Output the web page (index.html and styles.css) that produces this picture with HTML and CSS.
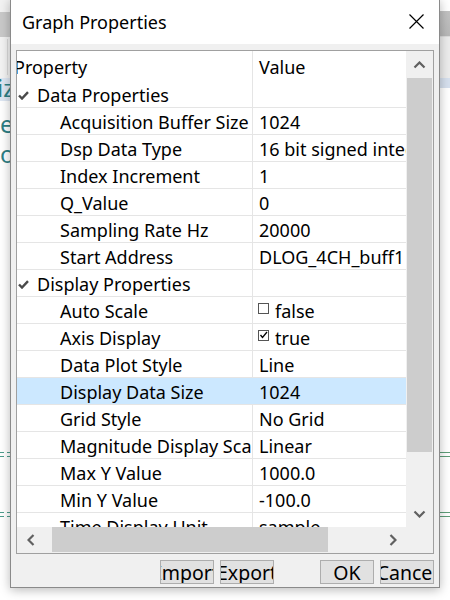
FILE: index.html
```html
<!DOCTYPE html>
<html lang="en">
<head>
  <meta charset="UTF-8" />
  <title>Graph Properties</title>
  <link rel="stylesheet" href="styles.css">
</head>
<body>
  <!-- windows behind the dialog -->
  <div class="back back-left">
    <div class="bl-top"></div>
    <div class="bl-band"></div>
    <div class="bl-tool"><span class="bl-sep"></span></div>
    <div class="bl-sel"><span class="teal">iz</span></div>
    <div class="bl-text first teal">e</div>
    <div class="bl-text teal">o</div>
    <div class="wire-l wire-a"></div>
    <div class="wire-l wire-b"></div>
  </div>
  <div class="back back-right">
    <div class="br-band"></div>
    <div class="br-tool"></div>
    <div class="br-sel"></div>
    <div class="wire-r wire-a"></div>
    <div class="wire-r wire-b"></div>
  </div>

  <div class="dialog">
    <div class="titlebar">
      <span class="title">Graph Properties</span>
      <svg class="close" width="15" height="15" viewBox="0 0 15 15">
        <path d="M0.5 0.5 L14.5 14.5 M14.5 0.5 L0.5 14.5" stroke="#000" stroke-width="1.2" fill="none"/>
      </svg>
    </div>

    <div class="body">
      <div class="grid-panel">
        <div class="grid-main">
          <div class="grid-view">
            <div class="row head">
              <div class="prop"><span class="shift">Property</span></div>
              <div class="val">Value</div>
            </div>

            <div class="row cat">
              <div class="prop">
                <svg class="tick" width="11" height="9" viewBox="0 0 11 9"><path d="M1 4.5 L4 7.5 L10 1.2" stroke="#4a4a4a" stroke-width="2.4" fill="none"/></svg>
                Data Properties
              </div>
              <div class="val"></div>
            </div>
            <div class="row"><div class="prop">Acquisition Buffer Size</div><div class="val">1024</div></div>
            <div class="row"><div class="prop">Dsp Data Type</div><div class="val">16 bit signed integer</div></div>
            <div class="row"><div class="prop">Index Increment</div><div class="val">1</div></div>
            <div class="row"><div class="prop">Q_Value</div><div class="val">0</div></div>
            <div class="row"><div class="prop">Sampling Rate Hz</div><div class="val">20000</div></div>
            <div class="row"><div class="prop">Start Address</div><div class="val">DLOG_4CH_buff1</div></div>

            <div class="row cat">
              <div class="prop">
                <svg class="tick" width="11" height="9" viewBox="0 0 11 9"><path d="M1 4.5 L4 7.5 L10 1.2" stroke="#4a4a4a" stroke-width="2.4" fill="none"/></svg>
                Display Properties
              </div>
              <div class="val"></div>
            </div>
            <div class="row"><div class="prop">Auto Scale</div><div class="val"><span class="check"></span>false</div></div>
            <div class="row">
              <div class="prop">Axis Display</div>
              <div class="val">
                <span class="check">
                  <svg width="9" height="9" viewBox="0 0 9 9"><path d="M1.5 4 L3.5 6.5 L8 1" stroke="#000" stroke-width="1.3" fill="none"/></svg>
                </span>true
              </div>
            </div>
            <div class="row"><div class="prop">Data Plot Style</div><div class="val">Line</div></div>
            <div class="row selected"><div class="prop">Display Data Size</div><div class="val">1024</div></div>
            <div class="row"><div class="prop">Grid Style</div><div class="val">No Grid</div></div>
            <div class="row"><div class="prop">Magnitude Display Scale</div><div class="val">Linear</div></div>
            <div class="row"><div class="prop">Max Y Value</div><div class="val">1000.0</div></div>
            <div class="row"><div class="prop">Min Y Value</div><div class="val">-100.0</div></div>
            <div class="row"><div class="prop">Time Display Unit</div><div class="val">sample</div></div>
          </div>

          <div class="vscroll">
            <div class="sb-btn">
              <svg width="13" height="8" viewBox="0 0 13 8"><path d="M1.5 6.5 L6.5 1.5 L11.5 6.5" stroke="#606060" stroke-width="2.2" fill="none"/></svg>
            </div>
            <div class="vthumb"></div>
            <div class="sb-fill"></div>
            <div class="sb-btn">
              <svg width="13" height="8" viewBox="0 0 13 8"><path d="M1.5 1.5 L6.5 6.5 L11.5 1.5" stroke="#606060" stroke-width="2.2" fill="none"/></svg>
            </div>
          </div>
        </div>

        <div class="hbar">
          <div class="hscroll">
            <div class="sb-btn h">
              <svg width="8" height="12" viewBox="0 0 8 12"><path d="M6.5 1 L1.5 6 L6.5 11" stroke="#606060" stroke-width="2.2" fill="none"/></svg>
            </div>
            <div class="htrack"><div class="hthumb"></div></div>
            <div class="sb-btn h">
              <svg width="8" height="12" viewBox="0 0 8 12"><path d="M1.5 1 L6.5 6 L1.5 11" stroke="#606060" stroke-width="2.2" fill="none"/></svg>
            </div>
          </div>
          <div class="corner"></div>
        </div>
      </div>

      <div class="buttons">
        <button class="btn">Import</button>
        <button class="btn">Export</button>
        <button class="btn ok">OK</button>
        <button class="btn">Cancel</button>
      </div>
    </div>
  </div>
</body>
</html>
```

FILE: styles.css
```css
body {
  margin: 0;
  width: 450px;
  height: 600px;
  overflow: hidden;
  position: relative;
  background: #fff;
  font-family: "Noto Sans", "Open Sans", sans-serif;
}

/* ---- windows behind ---- */
.back {
  position: absolute;
  top: 0;
  height: 600px;
  overflow: hidden;
}

.back-left {
  left: 0;
  width: 12px;
}

.back-right {
  left: 438px;
  width: 12px;
}

.bl-top {
  height: 12px;
  background: #f2f2f2;
}

.bl-band {
  height: 25px;
  background: #c9c9c9;
}

.bl-tool {
  height: 41px;
  background: #f3f3f3;
  position: relative;
}

.bl-sep {
  position: absolute;
  left: 7px;
  top: 2px;
  width: 1px;
  height: 36px;
  background: #dadada;
}

.bl-sel {
  height: 23px;
  background: #dee7f3;
  font-size: 24px;
  line-height: 20px;
  margin-left: -3px;
}

.bl-text {
  font-size: 24px;
  line-height: 29px;
  margin-top: 1px;
}

.bl-text.first {
  margin-top: 8px;
}

.teal {
  color: #2d7e84;
}

.wire-l {
  position: absolute;
  left: 0;
  width: 12px;
  height: 5px;
  background:
    repeating-linear-gradient(90deg, #4c9c8c 0 4px, transparent 4px 7px) top / 100% 1px no-repeat,
    repeating-linear-gradient(90deg, #4c9c8c 0 4px, transparent 4px 7px) bottom / 100% 1px no-repeat;
}

.wire-r {
  position: absolute;
  left: 0;
  width: 12px;
  height: 5px;
  border-top: 1px solid #5e9e78;
  border-bottom: 1px solid #5e9e78;
  box-sizing: border-box;
}

.wire-a { top: 452px; }
.wire-b { top: 512px; }

.br-band {
  margin-top: 11px;
  height: 25px;
  background: linear-gradient(#c2c2c2, #b8b8b8);
}

.br-tool {
  height: 41px;
  background: #ececec;
  border-top: 1px solid #dcdcdc;
}

.br-sel {
  height: 10px;
  background: #d6e0ee;
}

/* ---- dialog ---- */
.dialog {
  position: absolute;
  left: 10px;
  top: -1px;
  width: 430px;
  height: 589px;
  box-sizing: border-box;
  border: 1px solid #8a8a8a;
  background: #f0f0f0;
  box-shadow: 0 2px 10px rgba(0, 0, 0, 0.28);
  display: flex;
  flex-direction: column;
}

.titlebar {
  height: 44px;
  background: #fff;
  display: flex;
  align-items: center;
  justify-content: space-between;
  padding: 0 15px 0 11px;
}

.title {
  font-size: 18px;
  color: #000;
  margin-top: -1px;
}

.close {
  margin-top: -1px;
}

.body {
  padding: 6px 5px 0 5px;
}

.grid-panel {
  height: 504px;
  box-sizing: border-box;
  border: 1px solid #a0a0a0;
  background: #fff;
  display: flex;
  flex-direction: column;
}

.grid-main {
  display: flex;
  height: 476px;
}

.grid-view {
  width: 389px;
  overflow: hidden;
}

.row {
  display: grid;
  grid-template-columns: 235px 1fr;
  height: 27px;
  box-sizing: border-box;
  border-bottom: 1px solid #e5e5e5;
  font-size: 18px;
  color: #000;
  white-space: nowrap;
}

.row .prop,
.row .val {
  display: flex;
  align-items: center;
  overflow: hidden;
  padding-top: 2px;
}

.row .prop {
  padding-left: 43px;
}

.row .val {
  border-left: 1px solid #e5e5e5;
  padding-left: 6px;
}

.row.head {
  height: 30px;
  border-bottom: none;
}

.row.head .prop {
  padding-left: 0;
}

.shift {
  margin-left: -3px;
}

.row.cat .prop {
  padding-left: 1px;
}

.tick {
  margin: 0 8px 0 0;
}

.row.selected {
  background: #cce8ff;
}

.row.selected .val {
  border-left-color: #cce8ff;
}

.check {
  width: 11px;
  height: 11px;
  box-sizing: border-box;
  border: 1px solid #555;
  background: #fff;
  margin: -6px 6px 0 -1px;
  position: relative;
}

.check svg {
  position: absolute;
  left: 0;
  top: 0;
}

/* ---- scrollbars ---- */
.vscroll {
  width: 27px;
  background: #f0f0f0;
  display: flex;
  flex-direction: column;
}

.sb-btn {
  height: 27px;
  display: flex;
  align-items: center;
  justify-content: center;
  flex-shrink: 0;
}

.sb-btn.h {
  width: 27px;
  height: 26px;
}

.vthumb {
  height: 374px;
  margin: 0 1px 0 1px;
  background: #cdcdcd;
}

.sb-fill {
  flex: 1;
}

.hbar {
  display: flex;
  height: 26px;
}

.hscroll {
  width: 389px;
  display: flex;
  background: #f0f0f0;
}

.htrack {
  flex: 1;
}

.hthumb {
  margin-left: 8px;
  width: 276px;
  height: 25px;
  background: #cdcdcd;
}

.corner {
  width: 27px;
  background: #f0f0f0;
}

/* ---- buttons ---- */
.buttons {
  display: flex;
  justify-content: flex-end;
  gap: 6px;
  margin-top: 6px;
}

.btn {
  width: 54px;
  height: 24px;
  box-sizing: border-box;
  border: 1px solid #adadad;
  background: #e1e1e1;
  font-family: "Noto Sans", "Open Sans", sans-serif;
  font-size: 19.5px;
  color: #000;
  padding: 0;
  display: flex;
  align-items: center;
  justify-content: center;
  overflow: hidden;
  white-space: nowrap;
}

.btn.ok {
  margin-left: 40px;
}
```
